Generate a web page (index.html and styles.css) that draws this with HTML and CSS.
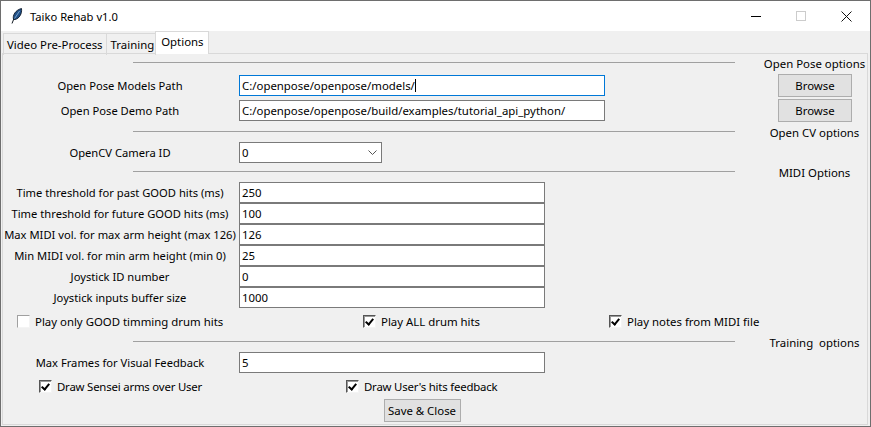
FILE: index.html
```html
<!DOCTYPE html>
<html lang="en">
<head>
    <meta charset="UTF-8">
    <title>Taiko Rehab v1.0</title>
    <link rel="stylesheet" href="styles.css">
</head>
<body>
    <div class="window">
        <div class="titlebar">
            <svg class="app-icon" width="12" height="16" viewBox="0 0 12 16">
                <path d="M1 15.5 L3.2 10" fill="none" stroke="#101820" stroke-width="1"/>
                <path d="M2.6 11.5 C1.2 7.5 4.5 2 10.5 0.5 C11.2 5.5 8.5 10.5 4 11.5 Z" fill="#1f4f86" stroke="#0e1a28" stroke-width="0.9"/>
                <path d="M3.6 10.5 L8.6 3" stroke="#9cc2e6" stroke-width="0.7"/>
            </svg>
            <span class="title">Taiko Rehab v1.0</span>
            <div class="controls">
                <svg width="10" height="10" viewBox="0 0 10 10"><path d="M0 5.5 H10" stroke="#000" stroke-width="1"/></svg>
                <svg width="10" height="10" viewBox="0 0 10 10"><rect x="0.5" y="0.5" width="9" height="9" fill="none" stroke="#ccc"/></svg>
                <svg width="11" height="11" viewBox="0 0 11 11"><path d="M0.5 0.5 L10.5 10.5 M10.5 0.5 L0.5 10.5" stroke="#111" stroke-width="1"/></svg>
            </div>
        </div>

        <div class="tabs">
            <div class="tab">Video Pre-Process</div>
            <div class="tab">Training</div>
            <div class="tab active">Options</div>
        </div>

        <div class="panel">
            <div class="section-head first">
                <div class="sep"></div>
                <div class="caption">Open Pose options</div>
            </div>
            <div class="row path-row">
                <label class="lbl">Open Pose Models Path</label>
                <div class="entry focused">C:/openpose/openpose/models/<span class="caret"></span></div>
                <button class="btn browse" type="button">Browse</button>
            </div>
            <div class="row path-row">
                <label class="lbl">Open Pose Demo Path</label>
                <div class="entry">C:/openpose/openpose/build/examples/tutorial_api_python/</div>
                <button class="btn browse" type="button">Browse</button>
            </div>

            <div class="section-head">
                <div class="sep"></div>
                <div class="caption">Open CV options</div>
            </div>
            <div class="row combo-row">
                <label class="lbl">OpenCV Camera ID</label>
                <div class="entry combo">0
                    <svg width="9" height="5" viewBox="0 0 9 5"><path d="M0.5 0.5 L4.5 4.5 L8.5 0.5" fill="none" stroke="#555"/></svg>
                </div>
            </div>

            <div class="section-head">
                <div class="sep"></div>
                <div class="caption">MIDI Options</div>
            </div>
            <div class="row field-row">
                <label class="lbl">Time threshold for past GOOD hits (ms)</label>
                <div class="entry wide">250</div>
            </div>
            <div class="row field-row">
                <label class="lbl">Time threshold for future GOOD hits (ms)</label>
                <div class="entry wide">100</div>
            </div>
            <div class="row field-row">
                <label class="lbl">Max MIDI vol. for max arm height (max 126)</label>
                <div class="entry wide">126</div>
            </div>
            <div class="row field-row">
                <label class="lbl">Min MIDI vol. for min arm height (min 0)</label>
                <div class="entry wide">25</div>
            </div>
            <div class="row field-row">
                <label class="lbl">Joystick ID number</label>
                <div class="entry wide">0</div>
            </div>
            <div class="row field-row">
                <label class="lbl">Joystick inputs buffer size</label>
                <div class="entry wide">1000</div>
            </div>

            <div class="checks midi-checks">
                <div class="check"><span class="box"></span>Play only GOOD timming drum hits</div>
                <div class="check"><span class="box on"></span>Play ALL drum hits</div>
                <div class="check"><span class="box on"></span>Play notes from MIDI file</div>
            </div>

            <div class="section-head training">
                <div class="sep"></div>
                <div class="caption">Training&nbsp; options</div>
            </div>
            <div class="row field-row">
                <label class="lbl">Max Frames for Visual Feedback</label>
                <div class="entry wide">5</div>
            </div>
            <div class="checks training-checks">
                <div class="check"><span class="box on"></span>Draw Sensei arms over User</div>
                <div class="check"><span class="box on"></span>Draw User's hits feedback</div>
            </div>
            <div class="footer">
                <button class="btn save" type="button">Save &amp; Close</button>
            </div>
        </div>
    </div>
</body>
</html>
```

FILE: styles.css
```css
html, body {
    margin: 0;
    padding: 0;
}
body {
    font-family: "Noto Sans", "Open Sans", sans-serif;
    font-size: 11.4px;
    color: #000;
    background-color: #f0f0f0;
}
.window {
    width: 871px;
    height: 427px;
    box-sizing: border-box;
    border: 1px solid #6e6e6e;
    background-color: #f0f0f0;
    overflow: hidden;
}

/* title bar */
.titlebar {
    height: 30px;
    background-color: #fff;
    display: flex;
    align-items: center;
    padding-left: 10px;
}
.app-icon {
    margin-right: 7px;
}
.title {
    font-size: 11.2px;
}
.controls {
    margin-left: auto;
    display: flex;
    align-items: center;
    gap: 35px;
    padding-right: 18px;
}

/* notebook tabs */
.tabs {
    height: 22px;
    display: flex;
    align-items: flex-start;
    padding-left: 2px;
}
.tab {
    box-sizing: border-box;
    height: 22px;
    margin-top: 2px;
    line-height: 21px;
    padding: 0 3px 0 3px;
    border: 1px solid #d9d9d9;
    border-bottom: none;
    margin-right: -1px;
}
.tab:nth-child(2) {
    padding: 0 1px 0 4px;
}
.tab.active {
    height: 23px;
    margin-top: 0;
    line-height: 20px;
    background-color: #fff;
    padding: 0 4px 0 5px;
    position: relative;
}

/* main panel */
.panel {
    height: 372px;
    box-sizing: border-box;
    margin: 0 2px 0 1px;
    border: 1px solid #d9d9d9;
}
.section-head {
    display: grid;
    grid-template-columns: 732px 1fr;
    height: 18px;
    margin-top: 1px;
}
.section-head.first {
    height: 19px;
    margin-top: 0;
}
.section-head.training {
    margin-top: 3px;
}
.sep {
    margin-left: 130px;
    margin-top: 7px;
    height: 1px;
    background-color: #a0a0a0;
}
.first .sep {
    margin-top: 8px;
}
.caption {
    padding-left: 27px;
    text-align: center;
    line-height: 18px;
    white-space: nowrap;
}
.first .caption {
    line-height: 20px;
}
.row {
    display: grid;
    grid-template-columns: 236px 366px 1fr;
    align-items: center;
}
.lbl {
    padding-right: 2px;
    font-size: 11.2px;
    text-align: center;
    white-space: nowrap;
}
.entry {
    box-sizing: border-box;
    height: 21px;
    line-height: 19px;
    padding-left: 2px;
    background-color: #fff;
    border: 1px solid #7a7a7a;
    white-space: nowrap;
}
.entry.focused {
    border-color: #0078d7;
}
.caret {
    display: inline-block;
    width: 1px;
    height: 13px;
    background-color: #000;
    vertical-align: -2px;
}
.path-row {
    height: 25px;
}
.combo-row {
    height: 21px;
}
.combo {
    width: 143px;
    display: flex;
    align-items: center;
    justify-content: space-between;
    padding-right: 4px;
}
.field-row {
    height: 21px;
}
.wide {
    width: 306px;
}

.btn {
    box-sizing: border-box;
    height: 23px;
    font: inherit;
    color: #000;
    padding: 0;
    background-color: #e1e1e1;
    border: 1px solid #adadad;
}
.browse {
    width: 74px;
    justify-self: end;
    margin-right: 15px;
}

.checks {
    display: grid;
    height: 20px;
    margin-top: 3px;
    align-items: center;
}
.check {
    display: flex;
    align-items: center;
    white-space: nowrap;
}
.box {
    box-sizing: border-box;
    width: 13px;
    height: 13px;
    margin-right: 5px;
    background-color: #fff;
    border: 1px solid #f4f4f4;
    border-top-color: #a0a0a0;
    border-left-color: #a0a0a0;
    position: relative;
}
.box.on {
    border-top-color: #555;
    border-left-color: #555;
    box-shadow: inset 1px 1px 0 #9a9a9a;
}
.box.on::after {
    content: "";
    position: absolute;
    left: 3px;
    top: 1px;
    width: 3px;
    height: 6px;
    border: solid #000;
    border-width: 0 2px 2px 0;
    transform: rotate(40deg);
}
.midi-checks {
    grid-template-columns: 346px 246px 1fr;
    padding-left: 14px;
}
.training-checks {
    grid-template-columns: 307px 1fr;
    padding-left: 36px;
    letter-spacing: -0.2px;
}
.footer {
    display: flex;
    justify-content: center;
    margin-top: 3px;
    padding-right: 26px;
}
.save {
    width: 77px;
}
```
